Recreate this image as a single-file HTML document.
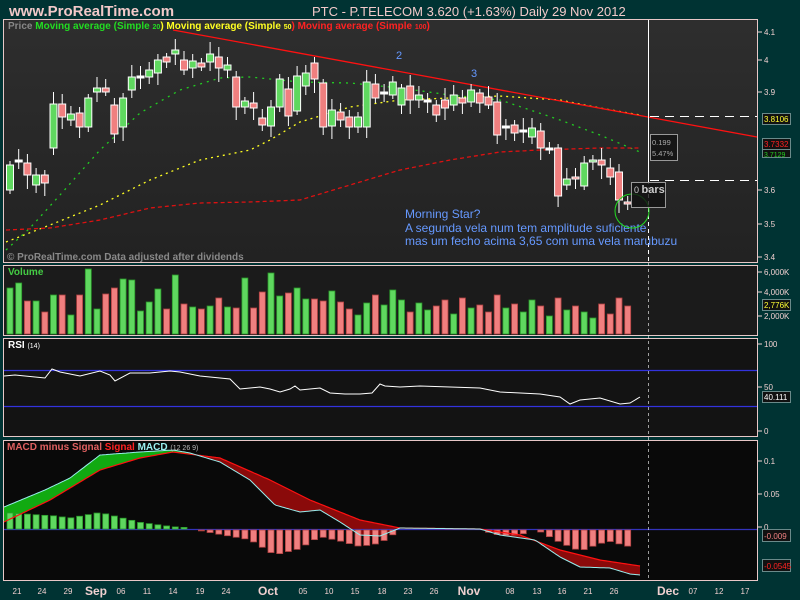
<!DOCTYPE html>
<html><head><meta charset="utf-8"><style>
html,body{margin:0;padding:0;background:#003333;}
body{width:800px;height:600px;overflow:hidden;position:relative;font-family:"Liberation Sans",sans-serif;}
svg{position:absolute;left:0;top:0;}
</style></head><body>
<svg id="s" width="800" height="600" xmlns="http://www.w3.org/2000/svg" font-family="Liberation Sans, sans-serif">
<defs>
<linearGradient id="gm" x1="0" y1="0" x2="0" y2="1"><stop offset="0" stop-color="#2e2e2e"/><stop offset="1" stop-color="#222"/></linearGradient>
</defs>
<rect x="0" y="0" width="800" height="600" fill="#003333"/>
<text x="9" y="16" fill="#f2c9c9" font-size="15" font-weight="bold">www.ProRealTime.com</text>
<text x="312" y="16" fill="#f2c9c9" font-size="13">PTC - P.TELECOM    3.620 (+1.63%)    Daily  29 Nov 2012</text>
<rect x="3.5" y="19.5" width="754" height="243" fill="url(#gm)" stroke="#e8c8c8"/>
<rect x="3.5" y="265.5" width="754" height="70" fill="#1b1b1b" stroke="#e8c8c8"/>
<rect x="3.5" y="338.5" width="754" height="98" fill="#131313" stroke="#e8c8c8"/>
<rect x="3.5" y="440.5" width="754" height="140" fill="#090909" stroke="#e8c8c8"/>
<g id="g"></g>
<text x="8" y="29" font-size="10" font-weight="bold"><tspan fill="#888">Price </tspan><tspan fill="#22dd22">Moving average (Simple </tspan><tspan fill="#22dd22" font-size="7">20</tspan><tspan fill="#ffff22">) Moving average (Simple </tspan><tspan fill="#ffff22" font-size="7">50</tspan><tspan fill="#ff2222">) Moving average (Simple </tspan><tspan fill="#ff2222" font-size="7">100</tspan><tspan fill="#ff2222">)</tspan></text>
<text x="7" y="260" font-size="10" font-weight="bold" fill="#888">© ProRealTime.com  Data adjusted after dividends</text>
<text x="396" y="59" font-size="11" fill="#6699ff">2</text>
<text x="471" y="77" font-size="11" fill="#6699ff">3</text>
<text x="405" y="218" font-size="12" fill="#6699ff">Morning Star?</text>
<text x="405" y="232" font-size="12" fill="#6699ff">A segunda vela num tem amplitude suficiente</text>
<text x="405" y="245" font-size="12" fill="#6699ff">mas um fecho acima 3,65 com uma vela marubuzu</text>
<circle cx="632" cy="211" r="17" fill="none" stroke="#22dd22" stroke-width="1"/>
<rect x="631.5" y="182.5" width="34" height="25" fill="#111" fill-opacity="0.8" stroke="#999"/>
<text x="634" y="193" font-size="9" fill="#ccc">0 <tspan font-weight="bold" font-size="11">bars</tspan></text>
<rect x="650.5" y="134.5" width="27" height="26" fill="#111" fill-opacity="0.8" stroke="#999"/>
<text x="652" y="145" font-size="7.5" fill="#aaa">0.199</text>
<text x="652" y="156" font-size="7.5" fill="#aaa">5.47%</text>
<text x="8" y="275" font-size="10" font-weight="bold" fill="#44cc44">Volume</text>
<text x="8" y="348" font-size="10" font-weight="bold" fill="#fff">RSI <tspan font-size="7" font-weight="normal">(14)</tspan></text>
<text x="7" y="450" font-size="10" font-weight="bold"><tspan fill="#e06060">MACD minus Signal </tspan><tspan fill="#ff2222">Signal </tspan><tspan fill="#99eeee">MACD </tspan><tspan fill="#bbb" font-size="7" font-weight="normal">(12 26 9)</tspan></text>
<g font-size="8" fill="#f0d0d0">
<text x="764" y="35">4.1</text><text x="764" y="63">4</text><text x="764" y="95">3.9</text>
<text x="764" y="193">3.6</text><text x="764" y="227">3.5</text><text x="764" y="260">3.4</text>
<text x="764" y="275">6,000K</text><text x="764" y="295">4,000K</text><text x="764" y="319">2,000K</text>
<text x="764" y="347">100</text><text x="764" y="390">50</text><text x="764" y="434">0</text>
<text x="764" y="464">0.1</text><text x="764" y="497">0.05</text><text x="764" y="530">0</text>
</g>
<g stroke="#f0d0d0"><path d="M758 32h4M758 60h4M758 92h4M758 190h4M758 224h4M758 257h4M758 272h4M758 292h4M758 316h4M758 344h4M758 387h4M758 431h4M758 461h4M758 494h4M758 527h4"/></g>
<g font-size="8">
<rect x="762.5" y="113.5" width="28" height="11" fill="#111" stroke="#6a8a8a"/><text x="764" y="122" fill="#ffff33">3.8106</text>
<rect x="762.5" y="138.5" width="28" height="11" fill="#111" stroke="#6a8a8a"/><text x="764" y="147" fill="#ff2222">3.7332</text>
<rect x="762.5" y="149.5" width="28" height="8" fill="#111" stroke="#6a8a8a"/><text x="764" y="157" fill="#22cc22" font-size="7">3.7129</text>
<rect x="762.5" y="299.5" width="28" height="11" fill="#111" stroke="#6a8a8a"/><text x="764" y="308" fill="#ffff33">2,776K</text>
<rect x="762.5" y="391.5" width="28" height="11" fill="#111" stroke="#6a8a8a"/><text x="764" y="400" fill="#fff">40.111</text>
<rect x="762.5" y="529.5" width="28" height="12" fill="#111" stroke="#6a8a8a"/><text x="764" y="539" fill="#f08080">-0.009</text>
<rect x="762.5" y="559.5" width="28" height="12" fill="#111" stroke="#6a8a8a"/><text x="764" y="569" fill="#ff2222">-0.0545</text>
</g>
<g font-size="8" fill="#f0d0d0" text-anchor="middle">
<text x="17" y="594">21</text><text x="42" y="594">24</text><text x="68" y="594">29</text>
<text x="96" y="595" font-size="12" font-weight="bold">Sep</text>
<text x="121" y="594">06</text><text x="147" y="594">11</text><text x="173" y="594">14</text><text x="200" y="594">19</text><text x="226" y="594">24</text>
<text x="268" y="595" font-size="12" font-weight="bold">Oct</text>
<text x="303" y="594">05</text><text x="329" y="594">10</text><text x="355" y="594">15</text><text x="382" y="594">18</text><text x="408" y="594">23</text><text x="434" y="594">26</text>
<text x="469" y="595" font-size="12" font-weight="bold">Nov</text>
<text x="510" y="594">08</text><text x="537" y="594">13</text><text x="562" y="594">16</text><text x="588" y="594">21</text><text x="614" y="594">26</text>
<text x="668" y="595" font-size="12" font-weight="bold">Dec</text>
<text x="693" y="594">07</text><text x="719" y="594">12</text><text x="745" y="594">17</text>
</g>
</svg>
<script>
(function(){
var g=document.getElementById("g"),h="";
function X(i){return 10+i*8.7;}
var C=[[190,165],[160,160],[163,175],[185,175],[175,183],[148,104],[104,117],[120,114],[113,127],[127,98],[92,88],[88,92],[105,134],[127,98],[90,77],[76,76],[77,70],[73,60],[57,62],[54,50],[60,70],[68,61],[63,67],[62,54],[57,68],[70,65],[77,107],[107,101],[103,108],[118,125],[126,107],[107,79],[89,116],[111,76],[86,73],[63,79],[83,127],[126,110],[112,120],[117,127],[127,117],[127,82],[84,98],[92,92],[95,82],[105,88],[86,100],[100,95],[100,100],[105,115],[100,108],[105,95],[98,103],[102,90],[93,103],[97,105],[102,135],[126,126],[125,133],[130,130],[137,128],[131,148],[148,148],[148,196],[185,179],[177,179],[186,163],[161,160],[160,165],[168,177],[172,200],[202,203]];
var V=[288,283,301,301,312,295,295,315,295,269,309,294,288,279,280,311,302,289,309,275,304,307,309,306,298,307,308,278,308,292,273,296,293,288,299,299,301,291,302,309,315,303,295,305,290,300,312,303,310,306,300,314,298,308,305,312,295,308,304,312,300,306,316,298,310,306,312,318,304,314,298,306];
function interp(pts,x){for(var k=1;k<pts.length;k++){if(x<=pts[k][0]){var a=pts[k-1],b=pts[k];return a[1]+(b[1]-a[1])*(x-a[0])/(b[0]-a[0]);}}return pts[pts.length-1][1];}
function dash(pts,x0,x1,col,da){var d="";for(var x=x0;x<=x1;x+=3){d+=(x==x0?"M":"L")+x+" "+interp(pts,x).toFixed(1);}h+='<path d="'+d+'" fill="none" stroke="'+col+'" stroke-width="1.3" stroke-dasharray="'+da+'"/>';}
dash([[6,250],[30,228],[60,195],[100,150],[140,113],[180,90],[220,78],[250,77],[300,82],[350,83],[400,88],[450,95],[500,100],[560,120],[600,135],[640,152]],6,640,"#22cc22","2,5");
dash([[6,242],[50,225],[100,205],[150,180],[200,160],[250,150],[270,140],[300,122],[350,107],[400,100],[450,98],[500,96],[560,100],[600,108],[640,115]],6,640,"#ffff22","2,4");
dash([[6,230],[50,228],[100,220],[150,208],[200,203],[250,202],[300,200],[350,185],[400,170],[450,160],[500,152],[540,150],[600,148],[640,148]],6,640,"#dd1111","4,3");
h+='<line x1="173" y1="30" x2="757" y2="137" stroke="#ff1111" stroke-width="1.3"/>';
h+='<line x1="648.5" y1="20" x2="648.5" y2="180" stroke="#fff"/>';
h+='<line x1="648.5" y1="180" x2="648.5" y2="262" stroke="#fff" stroke-dasharray="4,3"/>';
h+='<path d="M650 116.5h107M650 180.5h107" stroke="#fff" stroke-dasharray="9,6"/>';
for(var i=0;i<C.length;i++){var o=C[i][0],c=C[i][1],x=X(i),t=Math.min(o,c),b=Math.max(o,c);
var hi=t-4-(i*7%9),lo=b+4+(i*5%11);
var col=c<o?"#5fd85f":(c>o?"#f07f7f":"#fff");
h+='<line x1="'+x+'" y1="'+hi+'" x2="'+x+'" y2="'+lo+'" stroke="#fff"/>';
h+='<rect x="'+(x-3.5)+'" y="'+t+'" width="7" height="'+Math.max(b-t,2)+'" fill="'+col+'" stroke="#fff"/>';
var vc=c<=o?"#5fd85f":"#f07f7f",vs=c<=o?"#2a9a2a":"#b04040";
h+='<rect x="'+(x-3)+'" y="'+V[i]+'" width="6" height="'+(334-V[i])+'" fill="'+vc+'" stroke="'+vs+'" stroke-width="0.8"/>';}
h+='<path d="M4 370.5H757M4 406.5H757" stroke="#3333dd" stroke-width="1.2"/>';
var R=[[4,376],[15,375],[45,378],[52,369],[60,372],[80,376],[100,371],[110,375],[115,381],[130,373],[150,373],[170,371],[180,372],[200,376],[230,379],[240,389],[260,387],[270,389],[280,392],[290,389],[295,386],[300,390],[320,388],[330,393],[345,394],[360,394],[372,393],[380,384],[385,386],[400,387],[420,386],[480,388],[500,392],[540,394],[560,397],[570,404],[580,400],[600,398],[620,404],[630,403],[640,397]];
h+='<polyline points="'+R.map(function(p){return p.join(",")}).join(" ")+'" fill="none" stroke="#fff" stroke-width="1"/>';
var M=[[4,507],[45,490],[70,478],[100,455],[140,452],[173,450],[190,453],[220,462],[250,480],[275,505],[300,512],[320,510],[340,522],[360,535],[380,536],[400,528],[480,529],[500,535],[535,540],[560,557],[580,567],[610,568],[630,574],[640,575]];
var S=[[4,522],[50,500],[100,470],[140,458],[173,452],[220,458],[270,480],[310,500],[360,520],[400,528],[480,529],[520,535],[560,550],[600,560],[640,566]];
var xs=[];for(var x=4;x<=640;x+=2)xs.push(x);
var seg=null;function flush(){if(seg&&seg.pts.length>1){var a=seg.pts.map(function(p){return p[0]+","+p[1]}),b=seg.pts.slice().reverse().map(function(p){return p[0]+","+p[2]});h+='<polygon points="'+a.concat(b).join(" ")+'" fill="'+(seg.up?"#11aa11":"#8a0a0a")+'"/>';}}
xs.forEach(function(x){var m=interp(M,x),s=interp(S,x),up=m<=s;if(!seg||seg.up!==up){var last=seg?seg.pts[seg.pts.length-1]:null;flush();seg={up:up,pts:last?[last]:[]};}seg.pts.push([x,m.toFixed(1),s.toFixed(1)]);});flush();
h+='<line x1="4" y1="529.5" x2="757" y2="529.5" stroke="#3333bb" stroke-width="1.2"/>';
for(var i=0;i<C.length;i++){var x=X(i),d=(interp(S,x)-interp(M,x))*1.1;if(x>480&&d<0)d*=1.6;if(Math.abs(d)<0.8)continue;
if(d>0)h+='<rect x="'+(x-3)+'" y="'+(529-d)+'" width="6" height="'+d+'" fill="#5fd85f" stroke="#2a9a2a" stroke-width="0.8"/>';
else h+='<rect x="'+(x-3)+'" y="530" width="6" height="'+(-d)+'" fill="#f07f7f" stroke="#b04040" stroke-width="0.8"/>';}
h+='<polyline points="'+xs.map(function(x){return x+","+interp(S,x).toFixed(1)}).join(" ")+'" fill="none" stroke="#ff1111" stroke-width="1.2"/>';
h+='<polyline points="'+xs.map(function(x){return x+","+interp(M,x).toFixed(1)}).join(" ")+'" fill="none" stroke="#99eeee" stroke-width="1"/>';
h+='<line x1="648.5" y1="263" x2="648.5" y2="580" stroke="#fff" stroke-dasharray="3,3" stroke-opacity="0.6"/>';
g.innerHTML=h;
})();
</script>
</body></html>
